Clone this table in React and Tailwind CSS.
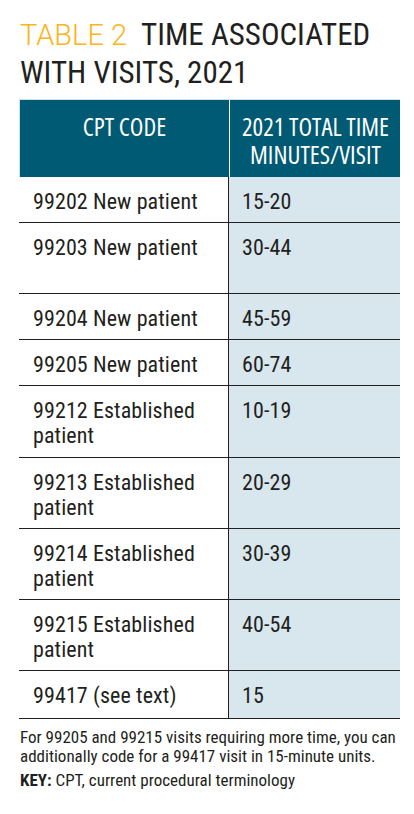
import React from "react";

const rows = [
  [["99202 New patient"], "15-20", "h-[46px]"],
  [["99203 New patient"], "30-44", "h-[71px]"],
  [["99204 New patient"], "45-59", "h-[46px]"],
  [["99205 New patient"], "60-74", "h-[46px]"],
  [["99212 Established", "patient"], "10-19", "h-[72px]"],
  [["99213 Established", "patient"], "20-29", "h-[71px]"],
  [["99214 Established", "patient"], "30-39", "h-[71px]"],
  [["99215 Established", "patient"], "40-54", "h-[71px]"],
  [["99417 (see text)"], "15", "h-[48px]"],
];

export default function App() {
  return (
    <div className="w-[414px] h-[814px] bg-white text-[#231f20] overflow-hidden font-[Roboto,sans-serif]">
      <div className="pl-[20px] pt-4 text-[31px] leading-[38px] font-stretch-[75%]">
        <span className="text-[#fbb516] font-light font-stretch-[100%] text-[29px]">TABLE 2</span>
        <span className="ml-[14px]">TIME ASSOCIATED</span>
        <br />
        <span>WITH VISITS, 2021</span>
      </div>
      <div className="ml-[19px] mt-[7px] w-[381px]">
        <div className="grid grid-cols-[210px_171px] h-[78px] bg-[#005a73] text-white text-[25px] leading-[28px] font-['Open_Sans',sans-serif] font-stretch-[75%] border-t border-l border-[#cfe0ea]">
          <div className="pt-[12px] text-center border-r border-white">CPT CODE</div>
          <div className="pt-[12px] text-center">
            2021 TOTAL TIME
            <br />
            MINUTES/VISIT
          </div>
        </div>
        {rows.map(([lines, time, h]) => (
          <div
            key={lines[0]}
            className={`grid grid-cols-[210px_171px] ${h} border-b border-[#231f20] text-[22px] leading-[25px] font-stretch-[75%] tracking-[0.1px]`}
          >
            <div className="pl-[14px] pt-[12px] border-r border-[#231f20] whitespace-nowrap">
              {lines.map((l) => (
                <div key={l}>{l}</div>
              ))}
            </div>
            <div className="pl-[13px] pt-[12px] bg-[#d8e6ee]">{time}</div>
          </div>
        ))}
      </div>
      <div className="pl-[20px] pr-[8px] mt-[9px] text-[17px] leading-[19px] font-stretch-[75%]">
        <p>For 99205 and 99215 visits requiring more time, you can additionally code for a 99417 visit in 15-minute units.</p>
        <p className="mt-[5px]">
          <span className="font-bold">KEY:</span> CPT, current procedural terminology
        </p>
      </div>
    </div>
  );
}
